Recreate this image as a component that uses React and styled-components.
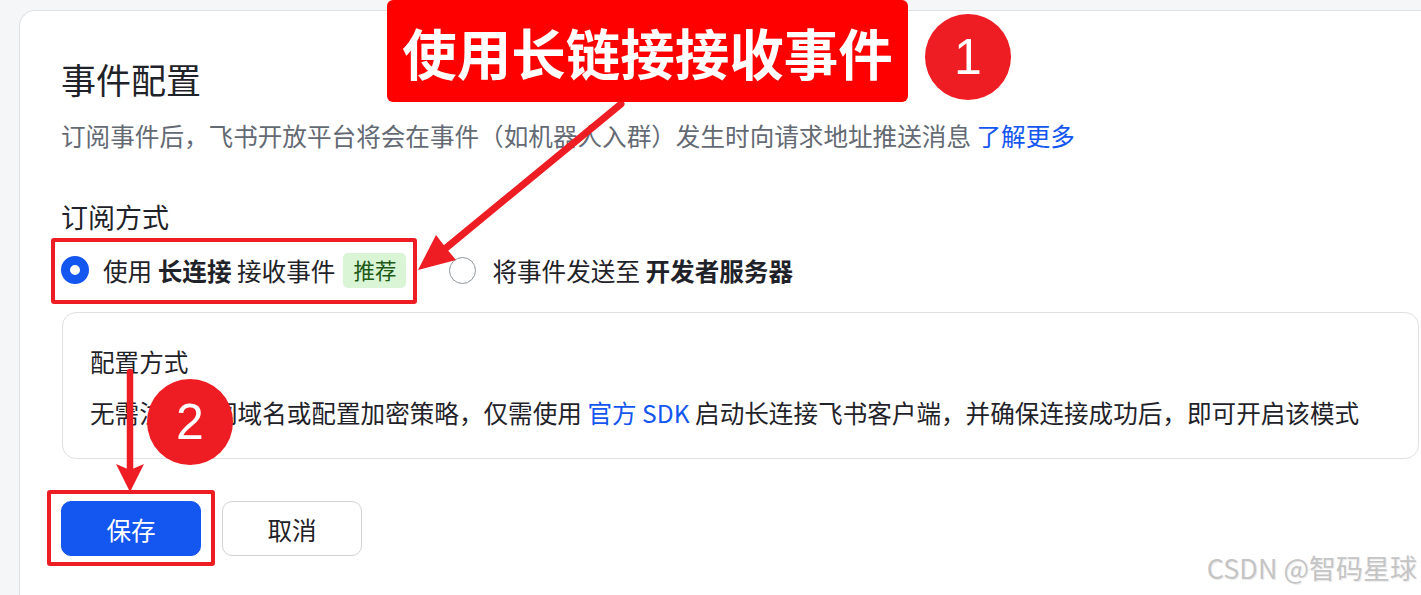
import styled, { createGlobalStyle } from "styled-components"

const GlobalStyle = createGlobalStyle`
  body {
    margin: 0;
    background: #f5f6f7;
    font-family: "Noto Sans CJK SC", "Noto Sans", sans-serif;
    color: #1f2329;
  }
`

const Page = styled.div`
  position: relative;
  width: 1421px;
  height: 595px;
  overflow: hidden;
  padding: 10px 0 0 19px;
  box-sizing: border-box;
`

const Card = styled.div`
  width: 1420px;
  height: 620px;
  box-sizing: border-box;
  background: #fff;
  border: 1px solid #dee0e3;
  border-right: none;
  border-radius: 16px 0 0 0;
  padding: 44px 20px 0 41px;
`

const Title = styled.h2`
  margin: 0;
  font-size: 35px;
  line-height: 48px;
  font-weight: 400;
  color: #1f2329;
`

const Desc = styled.p`
  margin: 14px 0 0;
  font-size: 24.6px;
  line-height: 36px;
  color: #646a73;
`

const Link = styled.a`
  color: #1456f0;
  text-decoration: none;
`

const Label = styled.div`
  margin-top: 45px;
  font-size: 27px;
  line-height: 38px;
  color: #1f2329;
`

const RadioRow = styled.div`
  margin-top: 16px;
  height: 36px;
  display: flex;
  align-items: center;
  gap: 43px;
`

const Option = styled.label`
  position: relative;
  display: flex;
  align-items: center;
  font-size: 24.6px;
  line-height: 36px;
  color: #1f2329;
  b { font-weight: 700; }
`

const Highlight = styled.div`
  position: relative;
  &::after {
    content: "";
    position: absolute;
    top: ${p => p.$t}px;
    bottom: ${p => p.$b}px;
    left: ${p => p.$l}px;
    right: ${p => p.$r}px;
    border: 4px solid #ee1d24;
    border-radius: 3px;
    pointer-events: none;
  }
`

const Radio = styled.span`
  width: ${p => (p.$checked ? 28 : 27)}px;
  height: ${p => (p.$checked ? 28 : 27)}px;
  box-sizing: border-box;
  border-radius: 50%;
  margin-right: ${p => (p.$checked ? 14 : 16)}px;
  flex: none;
  border: ${p => (p.$checked ? "9px solid #1456f0" : "1px solid #8f959e")};
  background: #fff;
`

const Tag = styled.span`
  margin-left: 8px;
  height: 35px;
  padding: 0 10px;
  display: inline-flex;
  align-items: center;
  border-radius: 5px;
  background: #d9f5d6;
  color: #1c5a16;
  font-size: 21.5px;
`

const InfoBox = styled.div`
  margin-top: 24px;
  margin-left: 1px;
  border: 1px solid #dee0e3;
  border-radius: 14px;
  padding: 31px 27px 29px;
`

const InfoTitle = styled.div`
  font-size: 24.6px;
  line-height: 34px;
  color: #1f2329;
`

const InfoText = styled.div`
  margin-top: 17px;
  font-size: 24.6px;
  line-height: 34px;
  color: #1f2329;
`

const Actions = styled.div`
  margin-top: 42px;
  display: flex;
  gap: 21px;
`

const Button = styled.button`
  width: 140px;
  height: 55px;
  border-radius: 10px;
  font-family: inherit;
  font-size: 24.6px;
  border: 1px solid ${p => (p.$primary ? "#1456f0" : "#d0d3d6")};
  background: ${p => (p.$primary ? "#1456f0" : "#fff")};
  color: ${p => (p.$primary ? "#fff" : "#1f2329")};
  cursor: pointer;
`

const Callout = styled.div`
  position: absolute;
  left: 387px;
  top: 0;
  width: 521px;
  height: 102px;
  border-radius: 6px;
  background: #ff0000;
  color: #fff;
  font-size: 54.5px;
  font-weight: 700;
  display: flex;
  align-items: center;
  justify-content: center;
`

const Badge = styled.div`
  position: absolute;
  left: ${p => p.$x - 43}px;
  top: ${p => p.$y - 43}px;
  width: 86px;
  height: 86px;
  border-radius: 50%;
  background: #ee1d24;
  color: #fff;
  font-family: "Liberation Sans", Arial, sans-serif;
  font-size: 50px;
  display: flex;
  align-items: center;
  justify-content: center;
`

const Arrows = styled.svg`
  position: absolute;
  left: 0;
  top: 0;
  pointer-events: none;
`

const Watermark = styled.div`
  position: absolute;
  right: 4px;
  bottom: 8px;
  font-size: 27px;
  color: #c4c4c4;
  text-shadow: 0 0 1px #fff, 1px 1px 1px #e8e8e8;
`

export default function App() {
  return (
    <>
      <GlobalStyle />
      <Page>
        <Card>
          <Title>事件配置</Title>
          <Desc>
            订阅事件后，飞书开放平台将会在事件（如机器人入群）发生时向请求地址推送消息 <Link>了解更多</Link>
          </Desc>
          <Label>订阅方式</Label>
          <RadioRow>
            <Highlight $t={-14} $b={-16} $l={-10} $r={-11}>
              <Option>
                <Radio $checked />
                使用&nbsp;<b>长连接</b>&nbsp;接收事件
                <Tag>推荐</Tag>
              </Option>
            </Highlight>
            <Option>
              <Radio />
              将事件发送至&nbsp;<b>开发者服务器</b>
            </Option>
          </RadioRow>
          <InfoBox>
            <InfoTitle>配置方式</InfoTitle>
            <InfoText>
              无需注册公网域名或配置加密策略，仅需使用 <Link>官方 SDK</Link> 启动长连接飞书客户端，并确保连接成功后，即可开启该模式
            </InfoText>
          </InfoBox>
          <Actions>
            <Highlight $t={-11} $b={-10} $l={-14} $r={-14}>
              <Button $primary>保存</Button>
            </Highlight>
            <Button>取消</Button>
          </Actions>
        </Card>

        <Arrows width="1421" height="595" viewBox="0 0 1421 595">
          <line x1="621" y1="104" x2="446" y2="248" stroke="#ee1d24" strokeWidth="7" strokeLinecap="round" />
          <polygon points="418,270 436,235 446,248 456,260" fill="#ee1d24" />
          <line x1="130" y1="372" x2="130" y2="470" stroke="#ee1d24" strokeWidth="6.5" strokeLinecap="round" />
          <polygon points="130,492 116,464 130,470 144,464" fill="#ee1d24" />
        </Arrows>

        <Callout>使用长链接接收事件</Callout>
        <Badge $x={968} $y={57}>1</Badge>
        <Badge $x={190} $y={422}>2</Badge>
        <Watermark>CSDN @智码星球</Watermark>
      </Page>
    </>
  )
}
